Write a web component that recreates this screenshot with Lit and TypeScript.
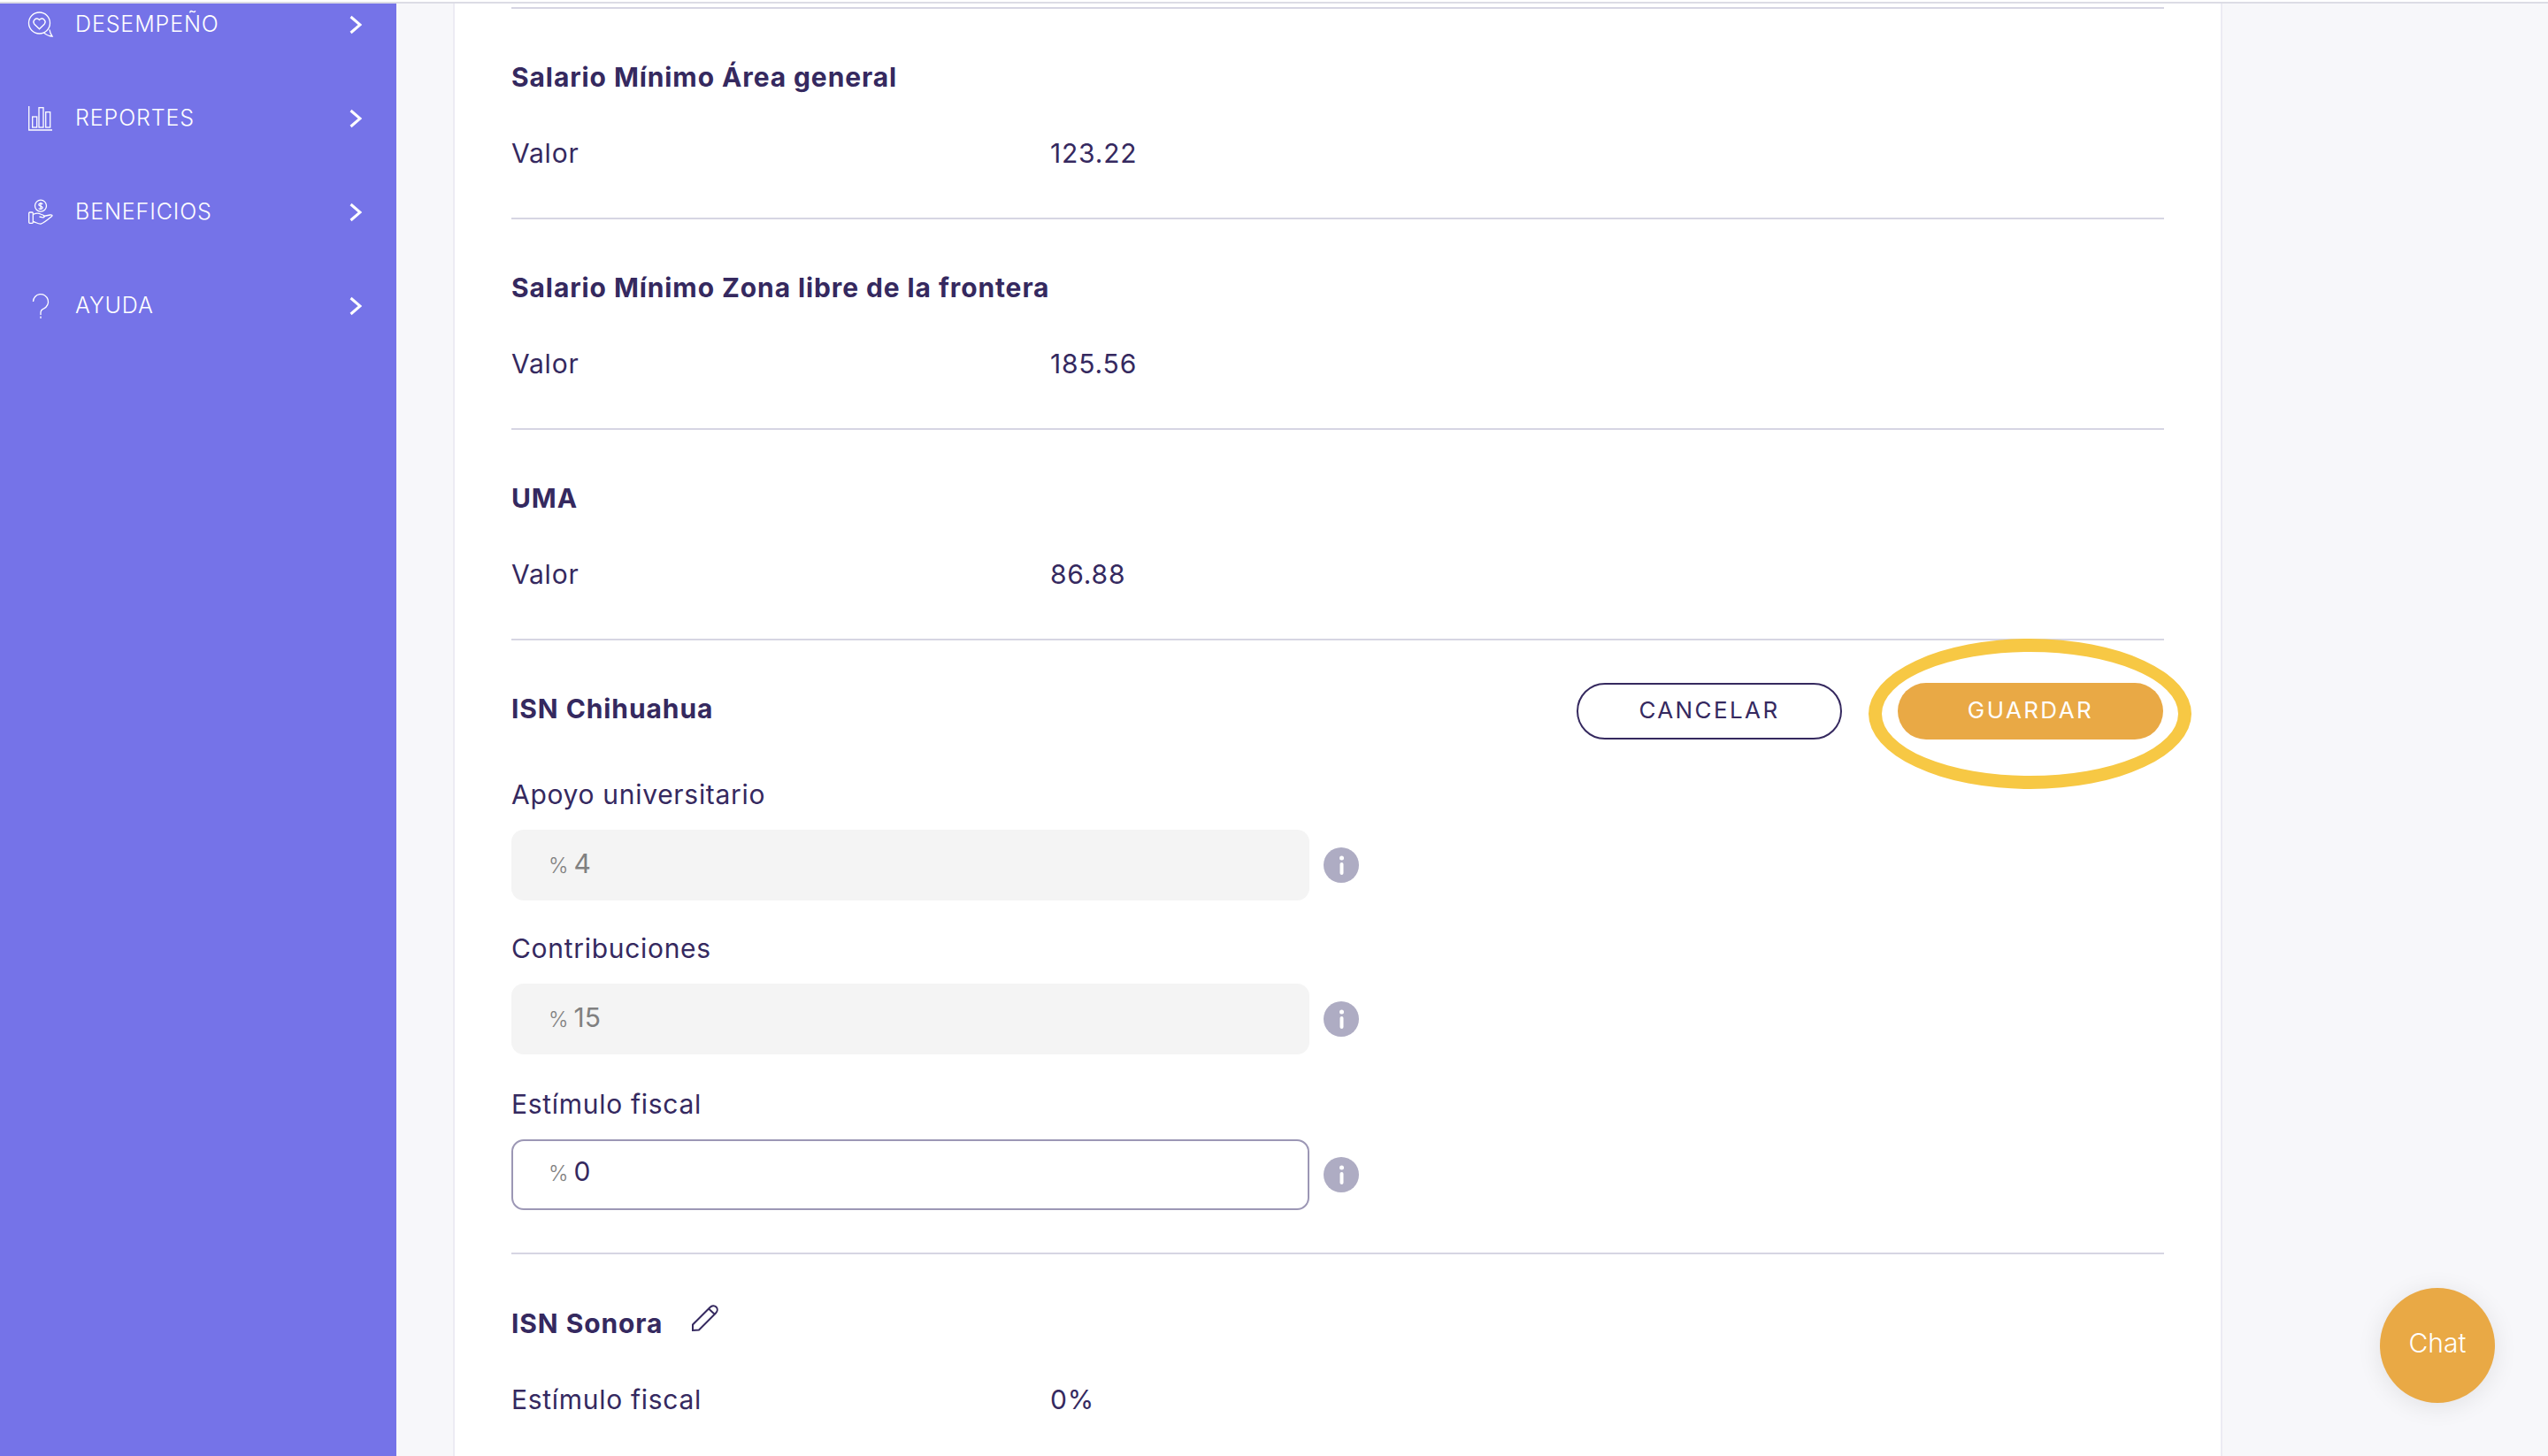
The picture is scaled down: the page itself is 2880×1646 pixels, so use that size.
import { LitElement, html, css, svg } from "lit";
import { customElement } from "lit/decorators.js";

const icons: Record<string, unknown> = {
  heart: svg`<circle cx="12.500" cy="14" r="12"/><path d="M17.500 25c3 2.500 6.500 4 9.500 4-1.500-2-2.500-4.500-3-7.500"/><path d="M12.500 20.800 6.800 15.200a3.700 3.700 0 0 1 5.200-5.200l.5.500.5-.5a3.700 3.700 0 0 1 5.200 5.200Z"/>`,
  bars: svg`<path d="M.700 2V29H27"/><rect x="4.700" y="14" width="5" height="12"/><rect x="12" y="3.700" width="5" height="22.300"/><rect x="19.700" y="8.700" width="5" height="17.300"/>`,
  hand: svg`<circle cx="14" cy="8.700" r="6.500"/><path d="M16.200 6.800c-.8-1.200-4.400-1.200-4.400.8s4.400 1.200 4.400 3.200-3.600 2-4.500.7M14 4.700V12.700"/><rect x=".700" y="16" width="4.600" height="12.300" rx="1"/><path d="M5.300 18.500c3-1.500 6-2 8.500-.5l3.700 1.500c1.500 1 .5 2.500-1 2.300l-4-.8M17 20.500l7.500-1.500c2.500-.3 3 .5 2 1.500-3 2.500-8 7-12 8.500-3.500.5-6-2-9.200-2.500"/>`,
  help: svg`<path d="M5.500 11a8.500 8.500 0 1 1 12 7.800c-2.500 1-3.500 2.300-3.500 4.700V26M14 27.500V30"/>`,
};

const nav = [
  ["DESEMPEÑO", "heart"],
  ["REPORTES", "bars"],
  ["BENEFICIOS", "hand"],
  ["AYUDA", "help"],
];

const readouts = [
  ["Salario Mínimo Área general", "123.22"],
  ["Salario Mínimo Zona libre de la frontera", "185.56"],
  ["UMA", "86.88"],
];

const fields = [
  { label: "Apoyo universitario", value: "4", off: true },
  { label: "Contribuciones", value: "15", off: true },
  { label: "Estímulo fiscal", value: "0", off: false },
];

@customElement("app-root")
export class AppRoot extends LitElement {
  static styles = css`
    :host {
      display: block;
      height: 1646px;
      overflow: hidden;
      position: relative;
      background: #f7f7fa;
      color: #35295f;
      font-family: Inter, "Liberation Sans", sans-serif;
    }
    .top { height: 4px; background: #fff; border-bottom: 2px solid #dcdce5; box-sizing: border-box; }
    .shell { display: flex; height: 1642px; }
    .side { width: 448px; flex: none; background: #7573e8; overflow: hidden; color: #fff; }
    .nav { margin-top: -30px; }
    .item { height: 106px; display: flex; align-items: center; padding: 0 39px 0 32px; font-size: 25px; font-weight: 300; letter-spacing: 0.9px; }
    .item .ic { width: 28px; height: 30px; fill: none; stroke: #fff; stroke-width: 1.3; flex: none; margin-right: 25px; overflow: visible; }
    .item .name { flex: 1; }
    .item .chev { width: 14px; height: 22px; fill: none; stroke: #fff; stroke-width: 3; flex: none; position: relative; top: 1px; }
    .main { flex: 1; padding-left: 64px; }
    .card {
      width: 2000px; height: 1642px; box-sizing: border-box; overflow: hidden;
      background: #fff; border: solid #ecebf3; border-width: 0 2px;
      padding: 4px 64px 0;
    }
    .sec { border-top: 2px solid #d6d5e3; height: 236px; }
    .title { font-size: 30px; font-weight: 700; line-height: 40px; letter-spacing: 0.9px; }
    .sec > .title { padding-top: 57px; }
    .row { display: grid; grid-template-columns: 609px 1fr; line-height: 40px; font-size: 30px; letter-spacing: 0.8px; margin-top: 46px; }
    .edit { border-top: 2px solid #d6d5e3; height: 692px; box-sizing: content-box; }
    .head { display: flex; align-items: center; justify-content: space-between; padding-top: 48px; height: 64px; }
    .head .title { padding-bottom: 6px; }
    .acts { display: flex; gap: 63px; padding-right: 1px; }
    .btn { width: 300px; height: 64px; box-sizing: border-box; border-radius: 32px; display: flex; align-items: center; justify-content: center; font-size: 26px; letter-spacing: 2.4px; position: relative; padding-bottom: 3px; }
    .ghost { border: 2px solid #35295f; background: #fff; }
    .solid { background: #e9a945; color: #fff; }
    .ring { position: absolute; left: -33px; right: -32px; top: -50px; bottom: -56px; border: 15px solid #f7c844; border-radius: 50%; }
    .fields { padding-top: 8px; }
    .field { padding-top: 34px; }
    .field.last { padding-top: 36px; }
    .lab { line-height: 40px; font-size: 30px; letter-spacing: 0.7px; margin-bottom: 20px; }
    .line { display: flex; align-items: center; gap: 16px; }
    .box {
      width: 902px; height: 80px; box-sizing: border-box; border-radius: 14px;
      background: #f4f4f4; display: flex; align-items: center; padding: 0 0 4px 42px;
      font-size: 30px; color: #808080;
    }
    .box.on { background: #fff; border: 2px solid #9c97b5; padding: 0 0 8px 40px; color: #35295f; }
    .pct { font-size: 24px; font-weight: 300; color: #808080; margin-right: 6px; position: relative; top: 2px; }
    .info { width: 40px; height: 40px; flex: none; }
    .sonora { border-top: 2px solid #d6d5e3; }
    .sonora .tl { display: flex; align-items: center; padding-top: 58px; gap: 33px; }
    .sonora .row { letter-spacing: 0.7px; }
    .pen { width: 30px; height: 30px; fill: none; stroke: #35295f; stroke-width: 2; position: relative; top: -6px; overflow: visible; }
    .chat {
      position: absolute; left: 2690px; top: 1456px; width: 130px; height: 130px; border-radius: 50%;
      background: #e9a945; color: #fff; font-size: 30px; font-weight: 300;
      display: flex; align-items: center; justify-content: center; padding-bottom: 6px; box-sizing: border-box;
      box-shadow: 0 4px 28px rgba(0,0,0,.09);
    }
  `;

  render() {
    return html`
      <div class="top"></div>
      <div class="shell">
        <aside class="side">
          <div class="nav">
            ${nav.map(([name, ic]) => html`
              <div class="item">
                <svg class="ic" viewBox="0 0 28 30">${icons[ic]}</svg>
                <span class="name">${name}</span>
                <svg class="chev" viewBox="0 0 14 22"><path d="M1.500 2 12 11 1.500 20"/></svg>
              </div>`)}
          </div>
        </aside>
        <main class="main">
          <div class="card">
            ${readouts.map(([t, v]) => html`
              <section class="sec">
                <div class="title">${t}</div>
                <div class="row"><span>Valor</span><span>${v}</span></div>
              </section>`)}
            <section class="edit">
              <div class="head">
                <div class="title">ISN Chihuahua</div>
                <div class="acts">
                  <div class="btn ghost">CANCELAR</div>
                  <div class="btn solid">GUARDAR<span class="ring"></span></div>
                </div>
              </div>
              <div class="fields">
                ${fields.map((f, i) => html`
                  <div class="field ${i === 2 ? "last" : ""}">
                    <div class="lab">${f.label}</div>
                    <div class="line">
                      <div class="box ${f.off ? "" : "on"}"><span class="pct">%</span>${f.value}</div>
                      <svg class="info" viewBox="0 0 40 40"><circle cx="20" cy="20" r="20" fill="#aeacc3"/><rect x="18.500" y="17" width="4" height="14" rx="2" fill="#fff"/><circle cx="20.500" cy="12" r="2.500" fill="#fff"/></svg>
                    </div>
                  </div>`)}
              </div>
            </section>
            <section class="sonora">
              <div class="tl">
                <div class="title">ISN Sonora</div>
                <svg class="pen" viewBox="0 0 30 30"><path d="M1 29V22.500L20.500 3c2-2 5-2.500 7-.5s1.500 5-.5 7L8 28.500ZM19 4.500l7 6.500"/></svg>
              </div>
              <div class="row"><span>Estímulo fiscal</span><span>0%</span></div>
            </section>
          </div>
        </main>
      </div>
      <div class="chat">Chat</div>
    `;
  }
}
